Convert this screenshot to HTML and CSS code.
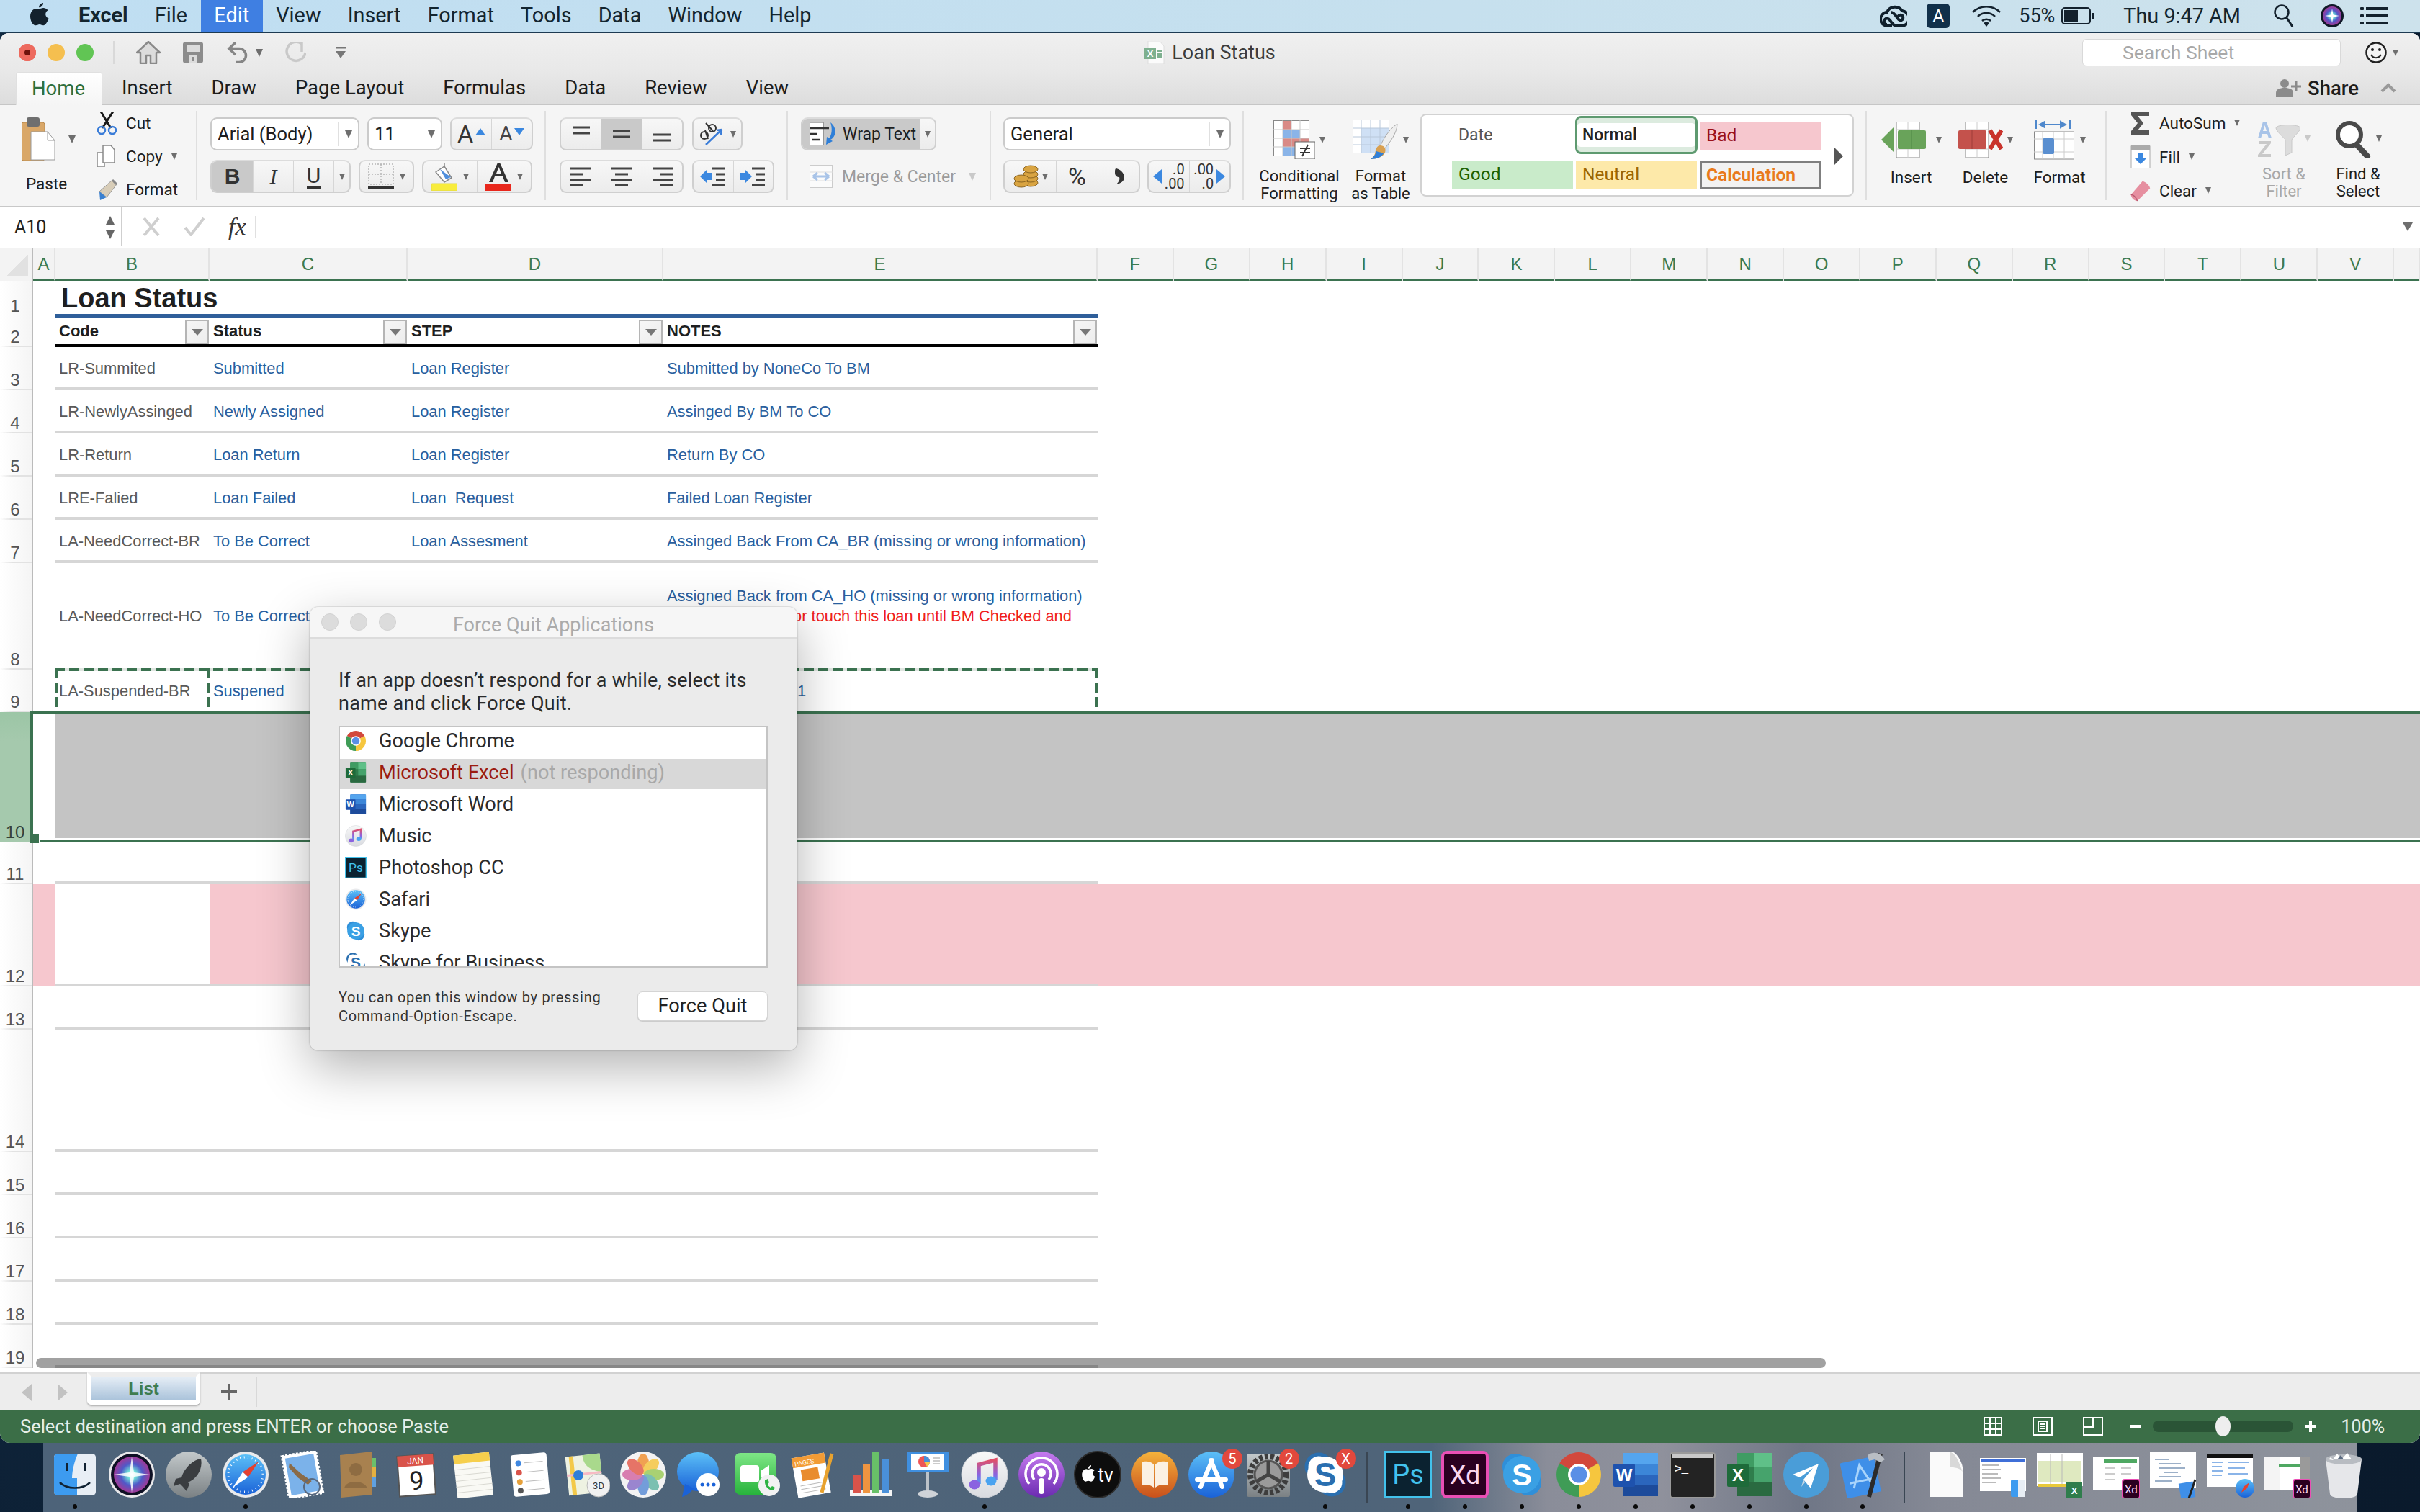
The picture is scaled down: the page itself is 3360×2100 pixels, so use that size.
FILE: index.html
```html
<!DOCTYPE html>
<html lang="en">
<head>
<meta charset="utf-8">
<title>Loan Status</title>
<link rel="stylesheet" href="styles.css">
</head>
<body>
<svg class="defs" width="0" height="0" aria-hidden="true">
<defs>
<linearGradient id="gBlue" x1="0" y1="0" x2="0" y2="1"><stop offset="0" stop-color="#5cc0f7"/><stop offset="1" stop-color="#1a62d8"/></linearGradient>
<linearGradient id="gOrange" x1="0" y1="0" x2="0" y2="1"><stop offset="0" stop-color="#f5b33c"/><stop offset="1" stop-color="#c9501c"/></linearGradient>
<linearGradient id="gPurple" x1="0" y1="0" x2="0" y2="1"><stop offset="0" stop-color="#c67bf0"/><stop offset="1" stop-color="#6a2bb0"/></linearGradient>
<linearGradient id="gNote" x1="0" y1="0" x2="0" y2="1"><stop offset="0" stop-color="#e0506a"/><stop offset=".6" stop-color="#8b63e0"/><stop offset="1" stop-color="#4aa3f0"/></linearGradient>
<linearGradient id="gGray" x1="0" y1="0" x2="0" y2="1"><stop offset="0" stop-color="#c3c9cb"/><stop offset="1" stop-color="#7b8184"/></linearGradient>
<linearGradient id="gSilver" x1="0" y1="0" x2="0" y2="1"><stop offset="0" stop-color="#f8f8f8"/><stop offset="1" stop-color="#d9dbe0"/></linearGradient>
<linearGradient id="gFace" x1="0" y1="0" x2="0" y2="1"><stop offset="0" stop-color="#7ee686"/><stop offset="1" stop-color="#27b33c"/></linearGradient>
<radialGradient id="gSiri"><stop offset="0" stop-color="#ffffff"/><stop offset=".25" stop-color="#6fe0d8"/><stop offset=".6" stop-color="#5058c8"/><stop offset="1" stop-color="#a03a98"/></radialGradient>

<symbol id="i-chrome" viewBox="0 0 66 66">
<path d="M33 33L6.2 17.5A31 31 0 0 1 59.8 17.5Z" fill="#d2483c"/>
<path d="M33 33L59.8 17.5A31 31 0 0 1 33 64Z" fill="#f6c63e"/>
<path d="M33 33L33 64A31 31 0 0 1 6.2 17.5Z" fill="#3f9c56"/>
<circle cx="33" cy="33" r="15" fill="#fff"/><circle cx="33" cy="33" r="11.5" fill="#5a8fe6"/>
</symbol>
<symbol id="i-excel" viewBox="0 0 66 66">
<rect x="16" y="3" width="48" height="60" rx="3" fill="#2f7d4c"/>
<rect x="40" y="3" width="24" height="20" fill="#5fc088"/><rect x="16" y="3" width="24" height="20" fill="#3f9c63"/>
<rect x="40" y="23" width="24" height="20" fill="#46a36c"/><rect x="16" y="23" width="24" height="20" fill="#2f7d4c"/>
<rect x="16" y="43" width="48" height="20" fill="#2a6a41"/>
<rect x="2" y="18" width="30" height="32" rx="2" fill="#1e6b3a"/>
<text x="17" y="42" class="svg-b" font-size="24" fill="#fff" text-anchor="middle">X</text>
</symbol>
<symbol id="i-word" viewBox="0 0 66 66">
<rect x="16" y="3" width="48" height="60" rx="3" fill="#2b6bc4"/>
<rect x="16" y="3" width="48" height="15" fill="#55a5ee"/><rect x="16" y="18" width="48" height="15" fill="#3c86d8"/>
<rect x="16" y="33" width="48" height="15" fill="#2b66bd"/><rect x="16" y="48" width="48" height="15" fill="#1d4b9b"/>
<rect x="2" y="18" width="30" height="32" rx="2" fill="#1e52ae"/>
<text x="17" y="42" class="svg-b" font-size="24" fill="#fff" text-anchor="middle">W</text>
</symbol>
<symbol id="i-safari" viewBox="0 0 66 66">
<circle cx="33" cy="33" r="32" fill="#e9eaec"/><circle cx="33" cy="33" r="28" fill="url(#gBlue)"/>
<circle cx="33" cy="33" r="24" fill="none" stroke="#fff" stroke-width="3" stroke-dasharray="1 4.5"/>
<path d="M51 15L29 29.5L36.500 36.500Z" fill="#e5402f"/><path d="M15 51L29 29.5L36.500 36.500Z" fill="#fff"/>
</symbol>
<symbol id="i-music" viewBox="0 0 66 66">
<circle cx="33" cy="33" r="32" fill="url(#gSilver)" stroke="#cfd2d8"/>
<path d="M25 46V19L48 13V41" fill="none" stroke="url(#gNote)" stroke-width="5.500"/>
<ellipse cx="19" cy="47" rx="7.500" ry="6.500" fill="#8b63e0"/><ellipse cx="42" cy="42" rx="7.500" ry="6.500" fill="#4aa3f0"/>
</symbol>
<symbol id="i-ps" viewBox="0 0 66 66">
<rect x="1.500" y="1.500" width="63" height="63" fill="#0b2230" stroke="#42c2ec" stroke-width="3"/>
<text x="33" y="46" class="svg-t" font-size="38" fill="#42c2ec" text-anchor="middle">Ps</text>
</symbol>
<symbol id="i-xd" viewBox="0 0 66 66">
<rect x="2" y="2" width="62" height="62" rx="6" fill="#2b0020" stroke="#ea4fb5" stroke-width="4"/>
<text x="33" y="46" class="svg-t" font-size="36" fill="#fad7f0" text-anchor="middle">Xd</text>
</symbol>
<symbol id="i-skype" viewBox="0 0 66 66">
<circle cx="24" cy="22" r="18" fill="#2f8fd9"/><circle cx="42" cy="44" r="18" fill="#2f8fd9"/><circle cx="33" cy="33" r="26" fill="#3aa0e4"/>
<text x="33" y="48" class="svg-b" font-size="42" fill="#fff" text-anchor="middle">S</text>
</symbol>
<symbol id="i-sfb" viewBox="0 0 66 66">
<circle cx="24" cy="22" r="17" fill="#fff" stroke="#2a6fb0" stroke-width="5"/><circle cx="42" cy="44" r="17" fill="#fff" stroke="#2a6fb0" stroke-width="5"/><circle cx="33" cy="33" r="25" fill="#fff"/>
<text x="33" y="49" class="svg-b" font-size="46" fill="#2a6fb0" text-anchor="middle">S</text>
</symbol>
</defs>
</svg>

<header class="menubar">
  <svg class="apple" width="26" height="32" viewBox="0 0 26 32"><path d="M18 0c.3 3-2.500 6.500-5.800 6.300C11.800 3.300 15 .4 18 0zM12.500 8.200c1.500 0 3.200-1.300 5.800-1.300 1.800 0 4.500.8 6.200 3.400-4.900 3.100-3.900 9.500 1.200 11.500-1.300 3.500-4.300 9.500-7.500 9.500-2 0-3-1.300-5.300-1.300s-3.400 1.300-5.200 1.300C3.500 31.800 0 24.500 0 18.800 0 12.300 4 8 8.200 7.900c1.800 0 3.200.3 4.300.3z" fill="#13212d"/></svg>
  <span class="menu menu-app">Excel</span>
  <span class="menu">File</span>
  <span class="menu menu-on">Edit</span>
  <span class="menu">View</span>
  <span class="menu">Insert</span>
  <span class="menu">Format</span>
  <span class="menu">Tools</span>
  <span class="menu">Data</span>
  <span class="menu">Window</span>
  <span class="menu">Help</span>
  <div class="tray">
    <svg width="38" height="36" viewBox="0 0 38 36"><g fill="none" stroke="#10202c" stroke-width="4"><path d="M17 32H11a9.500 9.500 0 0 1-1-19A12 12 0 0 1 31 11a10.500 10.500 0 0 1-2 21h-6c-4 0-7-5-9-8-2-3-5-3-7-1-2.500 3-.5 7 3 7"/><path d="M15 13c4 0 6 3 8 6 2 3 4 6 7 5 3-1 3-6 0-7-2-.5-4 .5-5 2"/></g></svg>
    <span class="tray-a">A</span>
    <svg class="tray-wifi" width="42" height="32" viewBox="0 0 42 32"><g fill="none" stroke="#13212d" stroke-width="2.500"><path d="M2 11a27 27 0 0 1 38 0"/><path d="M9 17a17 17 0 0 1 24 0"/><path d="M15 23a9 9 0 0 1 12 0"/></g><path d="M21 31l-4-5a6 6 0 0 1 8 0z" fill="#13212d"/></svg>
    <span class="tray-pct">55%</span>
    <svg class="tray-batt" width="46" height="24" viewBox="0 0 46 24"><rect x="1" y="1" width="39" height="22" rx="4" fill="none" stroke="#13212d" stroke-width="2"/><rect x="4" y="4" width="19" height="16" fill="#13212d"/><rect x="42" y="8" width="3" height="8" fill="#13212d"/></svg>
    <span class="tray-time">Thu 9:47 AM</span>
    <svg class="tray-search" width="30" height="34" viewBox="0 0 30 34"><circle cx="12" cy="12" r="9.500" fill="none" stroke="#13212d" stroke-width="2.500"/><path d="M18.500 19L27 32" stroke="#13212d" stroke-width="3"/></svg>
    <svg class="tray-siri" width="32" height="32" viewBox="0 0 32 32"><circle cx="16" cy="16" r="16" fill="#101828"/><circle cx="16" cy="16" r="13" fill="url(#gSiri)"/><path d="M16 6l1.500 8.500L26 16l-8.500 1.500L16 26l-1.500-8.500L6 16l8.500-1.500z" fill="#fff"/></svg>
    <svg class="tray-list" width="38" height="24" viewBox="0 0 38 24"><g fill="#13212d"><rect width="5" height="4" rx="1"/><rect y="10" width="5" height="4" rx="1"/><rect y="20" width="5" height="4" rx="1"/><rect x="8" width="30" height="4"/><rect x="8" y="10" width="30" height="4"/><rect x="8" y="20" width="30" height="4"/></g></svg>
  </div>
</header>

<main class="window">
  <div class="titlebar">
    <div class="title-left">
      <span class="light light-r"></span><span class="light light-y"></span><span class="light light-g"></span>
      <span class="title-sep"></span>
      <svg class="qat-home" width="34" height="32" viewBox="0 0 34 32"><path d="M17 1L1 16h5v15h8V20h6v11h8V16h5z" fill="#dcdcdc" stroke="#8a8a8a" stroke-width="2.500" stroke-linejoin="round"/></svg>
      <svg class="qat-save" width="28" height="28" viewBox="0 0 28 28"><path d="M2 0h24a2 2 0 0 1 2 2v24a2 2 0 0 1-2 2H2a2 2 0 0 1-2-2V2a2 2 0 0 1 2-2z" fill="#8c8c8c"/><rect x="5" y="3" width="18" height="10" fill="#dcdcdc"/><rect x="8" y="17" width="12" height="11" fill="#dcdcdc"/><rect x="12" y="20" width="4" height="6" fill="#8c8c8c"/></svg>
      <svg class="qat-undo" width="32" height="30" viewBox="0 0 32 30"><path d="M12 1L3 9.500l9 8.500M3 9.500h14a9 9 0 0 1 0 19h-4" fill="none" stroke="#868686" stroke-width="3.500"/></svg>
      <i class="caret caret-qat"></i>
      <svg class="qat-redo" width="30" height="30" viewBox="0 0 30 30"><path d="M24 3a13 13 0 1 0 5 12M24 1v13" fill="none" stroke="#c9c9c9" stroke-width="3.500"/></svg>
      <svg class="qat-more" width="14" height="16" viewBox="0 0 14 16"><rect width="14" height="2.500" fill="#777"/><path d="M0 6h14l-7 10z" fill="#777"/></svg>
    </div>
    <div class="title-mid">
      <svg width="28" height="32" viewBox="0 0 28 32"><path d="M5 0h16l6 7v25H5z" fill="#fbfbfb" stroke="#ddd"/><rect y="9" width="16" height="16" fill="#7eb08f"/><text x="8" y="22" class="svg-b" font-size="13" fill="#fff" text-anchor="middle">X</text><g fill="#7eb08f"><rect x="18" y="12" width="3" height="3"/><rect x="22" y="12" width="3" height="3"/><rect x="18" y="16" width="3" height="3"/><rect x="22" y="16" width="3" height="3"/><rect x="18" y="20" width="3" height="3"/><rect x="22" y="20" width="3" height="3"/></g></svg>
      <span class="doc-title">Loan Status</span>
    </div>
    <div class="title-right">
      <div class="search">Search Sheet</div>
      <svg class="smiley" width="30" height="30" viewBox="0 0 30 30"><circle cx="15" cy="15" r="13.500" fill="#f4f4f4" stroke="#222" stroke-width="2.500"/><circle cx="10" cy="11" r="2" fill="#222"/><circle cx="20" cy="11" r="2" fill="#222"/><path d="M8 18a8 8 0 0 0 14 0" fill="none" stroke="#222" stroke-width="2"/></svg>
      <i class="caret caret-sm"></i>
    </div>
  </div>

  <nav class="tabs">
    <span class="tab tab-on">Home</span>
    <span class="tab">Insert</span>
    <span class="tab">Draw</span>
    <span class="tab">Page Layout</span>
    <span class="tab">Formulas</span>
    <span class="tab">Data</span>
    <span class="tab">Review</span>
    <span class="tab">View</span>
    <div class="share">
      <svg width="36" height="26" viewBox="0 0 36 26"><circle cx="12" cy="7" r="6" fill="#8b8b8b"/><path d="M0 26v-6c0-5 5-7 12-7s12 2 12 7v6z" fill="#8b8b8b"/><path d="M28 4v14M21 11h14" stroke="#8b8b8b" stroke-width="3"/></svg>
      <span>Share</span>
      <svg class="chev" width="22" height="14" viewBox="0 0 22 14"><path d="M2 12L11 3l9 9" fill="none" stroke="#9a9a9a" stroke-width="4"/></svg>
    </div>
  </nav>

  <section class="ribbon">
    <div class="rg rg-clip">
      <div class="paste">
        <div class="paste-top">
          <svg width="46" height="60" viewBox="0 0 46 60"><rect y="7" width="32" height="53" rx="3" fill="#d9a768" stroke="#b98a4e"/><rect x="7" y="0" width="18" height="13" rx="3" fill="#6f6f6f"/><path d="M13 20h23l10 12v27H13z" fill="#fff" stroke="#9a9a9a"/><path d="M36 20v12h10" fill="none" stroke="#9a9a9a"/></svg>
          <i class="caret"></i>
        </div>
        <span class="lbl">Paste</span>
      </div>
      <div class="clip-list">
        <div class="clip-item"><svg width="30" height="32" viewBox="0 0 30 32"><path d="M6 0l14 23M23 0L8 23" stroke="#1a1a1a" stroke-width="3"/><circle cx="7" cy="26" r="5" fill="none" stroke="#3b7dd8" stroke-width="2.500"/><circle cx="22" cy="26" r="5" fill="none" stroke="#3b7dd8" stroke-width="2.500"/></svg><span>Cut</span></div>
        <div class="clip-item"><svg width="30" height="30" viewBox="0 0 30 30"><path d="M1 10h10v20H1z" fill="#fff" stroke="#888" stroke-width="1.500"/><path d="M9 0h11l5 6v18H9z" fill="#fff" stroke="#888" stroke-width="1.500"/></svg><span>Copy</span><i class="caret caret-sm"></i></div>
        <div class="clip-item"><svg width="30" height="30" viewBox="0 0 30 30"><path d="M4 18L22 2l6 6-14 18z" fill="#d8cdb8" stroke="#999"/><path d="M4 18l10 8-9 4z" fill="#3a80d0"/><path d="M22 2l6 6" stroke="#888" stroke-width="3"/></svg><span>Format</span></div>
      </div>
    </div>

    <div class="rg rg-font">
      <div class="rrow">
        <div class="combo combo-font"><span>Arial (Body)</span><i class="combo-sep"></i><i class="caret"></i></div>
        <div class="combo combo-size"><span>11</span><i class="combo-sep"></i><i class="caret"></i></div>
        <div class="bgroup bg-grow">
          <div class="bc bc-1"><span class="big-a">A</span><i class="tri-up"></i></div>
          <div class="bc bc-1"><span class="small-a">A</span><i class="tri-down"></i></div>
        </div>
      </div>
      <div class="rrow">
        <div class="bgroup bg-biu">
          <div class="bc bc-on b-b">B</div>
          <div class="bc b-i">I</div>
          <div class="bc b-u"><span>U</span></div>
          <div class="bc bc-arrow"><i class="caret caret-sm"></i></div>
        </div>
        <div class="bgroup bg-border">
          <div class="bc bc-fill"><svg width="36" height="36" viewBox="0 0 36 36"><g fill="none" stroke="#b5b5b5" stroke-width="1.500" stroke-dasharray="2 2"><path d="M1 1h34v28H1zM18 1v28M1 15h34"/></g><rect y="32" width="36" height="4" fill="#333"/></svg><i class="caret caret-sm"></i></div>
        </div>
        <div class="bgroup bg-color">
          <div class="bc bc-col"><svg width="36" height="40" viewBox="0 0 36 40"><path d="M18 1v10" stroke="#888" stroke-width="1.500"/><path d="M6 14l12-8 10 16-10 6z" fill="#fff" stroke="#888" stroke-width="1.500"/><path d="M12 10l8 14 7-3z" fill="#4f8edc"/><rect y="30" width="36" height="10" rx="1" fill="#f8ec3c" stroke="#e0d84a"/></svg><i class="caret caret-sm"></i></div>
          <div class="bc bc-col"><svg width="36" height="40" viewBox="0 0 36 40"><path d="M5 28L17 1h3l12 27h-5l-3-8H13l-3 8zM15 16h7l-3.500-9z" fill="#333" fill-rule="evenodd"/><rect y="30" width="36" height="10" fill="#e8271c"/></svg><i class="caret caret-sm"></i></div>
        </div>
      </div>
    </div>

    <div class="rg rg-align">
      <div class="rrow">
        <div class="bgroup bg-three">
          <div class="bc"><svg class="ic" width="26" height="26" viewBox="0 0 26 26"><path d="M1 4h24M1 12h24" stroke="#444" stroke-width="3"/></svg></div>
          <div class="bc bc-on"><svg class="ic" width="26" height="26" viewBox="0 0 26 26"><path d="M1 9h24M1 17h24" stroke="#444" stroke-width="3"/></svg></div>
          <div class="bc"><svg class="ic" width="26" height="26" viewBox="0 0 26 26"><path d="M1 14h24M1 22h24" stroke="#444" stroke-width="3"/></svg></div>
        </div>
        <div class="bgroup bg-orient">
          <div class="bc bc-fill"><svg width="36" height="36" viewBox="0 0 36 36"><g fill="none" stroke="#333" stroke-width="2"><circle cx="8" cy="20" r="5"/><path d="M13 25L9 13"/><circle cx="19" cy="10" r="5"/><path d="M10 3L20 14"/></g><path d="M10 33L32 12M32 12l-7 1M32 12l-1 7" fill="none" stroke="#3b7dd8" stroke-width="2.500"/></svg><i class="caret caret-sm"></i></div>
        </div>
      </div>
      <div class="rrow">
        <div class="bgroup bg-three">
          <div class="bc"><svg class="ic" width="30" height="26" viewBox="0 0 30 26"><path d="M0 2h28M0 10h18M0 18h28M0 25h18" stroke="#444" stroke-width="3"/></svg></div>
          <div class="bc"><svg class="ic" width="30" height="26" viewBox="0 0 30 26"><path d="M1 2h28M6 10h18M1 18h28M6 25h18" stroke="#444" stroke-width="3"/></svg></div>
          <div class="bc"><svg class="ic" width="30" height="26" viewBox="0 0 30 26"><path d="M2 2h28M12 10h18M2 18h28M12 25h18" stroke="#444" stroke-width="3"/></svg></div>
        </div>
        <div class="bgroup bg-indent">
          <div class="bc"><svg class="ic" width="36" height="26" viewBox="0 0 36 26"><path d="M0 13L10 3v5h6v10h-6v5z" fill="#3b88e0"/><path d="M16 2h18M22 10h12M22 18h12M16 25h18" stroke="#444" stroke-width="3"/></svg></div>
          <div class="bc"><svg class="ic" width="36" height="26" viewBox="0 0 36 26"><path d="M16 13L6 3v5H0v10h6v5z" fill="#3b88e0"/><path d="M16 2h18M22 10h12M22 18h12M16 25h18" stroke="#444" stroke-width="3"/></svg></div>
        </div>
      </div>
    </div>

    <div class="rg rg-wrap">
      <div class="rrow">
        <div class="bgroup bg-wrap">
          <div class="bc bc-on bc-wraptext"><svg width="40" height="32" viewBox="0 0 40 32"><rect x="0" y="0" width="19" height="32" fill="#fff" stroke="#666"/><path d="M0 8h27M0 16h10M4 24h10" stroke="#333" stroke-width="2.500"/><path d="M29 0c10 8 8 20 0 24l3 2-9 5 1-11 3 2c4-4 5-14 2-22z" fill="#2f7fd8"/></svg><span>Wrap Text</span></div>
          <div class="bc bc-arrow2"><i class="caret caret-sm"></i></div>
        </div>
      </div>
      <div class="rrow merge">
        <svg width="32" height="32" viewBox="0 0 32 32"><rect x=".5" y=".5" width="31" height="31" fill="#fbfbfb" stroke="#ccc"/><path d="M0 10h32M0 22h32" stroke="#ddd"/><path d="M5 16h22M5 16l6-5M5 16l6 5M27 16l-6-5M27 16l-6 5" fill="none" stroke="#a9c4e8" stroke-width="3"/></svg>
        <span>Merge &amp; Center</span><i class="caret caret-light"></i>
      </div>
    </div>

    <div class="rg rg-num">
      <div class="rrow">
        <div class="combo combo-gen"><span>General</span><i class="combo-sep"></i><i class="caret"></i></div>
      </div>
      <div class="rrow">
        <div class="bgroup bg-cur">
          <div class="bc bc-coins"><svg width="36" height="32" viewBox="0 0 36 32"><g fill="#d9a441" stroke="#8a6420"><ellipse cx="24" cy="25" rx="10" ry="5"/><ellipse cx="24" cy="19" rx="10" ry="5"/><ellipse cx="24" cy="13" rx="10" ry="5"/><ellipse cx="24" cy="6" rx="10" ry="5"/><ellipse cx="11" cy="26" rx="10" ry="5"/><ellipse cx="11" cy="19" rx="10" ry="5"/></g></svg><i class="caret caret-sm"></i></div>
          <div class="bc sym">%</div>
          <div class="bc sym"><svg width="13" height="22" viewBox="0 0 13 22"><path d="M2 0C10 2 13 8 13 13C13 17 8 21 2 22C6 18 7 15 6 12C3 12 0 10 0 6C0 3 0 0 2 0z" fill="#333"/></svg></div>
        </div>
        <div class="bgroup bg-dec">
          <div class="bc dec"><svg width="14" height="22" viewBox="0 0 14 22"><path d="M0 11L12 1v20z" fill="#3b88e0"/></svg><div class="dec-txt"><span>.0</span><span>.00</span></div></div>
          <div class="bc dec dec2"><div class="dec-txt"><span>.00</span><span>.0</span></div><svg width="14" height="22" viewBox="0 0 14 22"><path d="M14 11L2 1v20z" fill="#3b88e0"/></svg></div>
        </div>
      </div>
    </div>

    <div class="rg-styles">
      <div class="big-item bi-cond">
        <div class="bi-top"><svg width="58" height="54" viewBox="0 0 58 54"><rect x=".5" y=".5" width="49" height="49" fill="#fff" stroke="#888"/><rect x="13" y="1" width="12" height="12" fill="#d98a86"/><rect x="13" y="13" width="24" height="12" fill="#8ab4e8"/><rect x="13" y="25" width="37" height="12" fill="#d98a86"/><rect x="13" y="37" width="24" height="12" fill="#8ab4e8"/><path d="M13 0v50M25 0v50M37 0v50M0 13h50M0 25h50M0 37h50" stroke="#c8c8c8"/><rect x="30" y="30" width="28" height="24" fill="#fff" stroke="#666"/><path d="M37 39h14M37 45h14M48 34l-8 16" stroke="#333" stroke-width="2" fill="none"/></svg><i class="caret caret-sm"></i></div>
        <span class="lbl2">Conditional<br>Formatting</span>
      </div>
      <div class="big-item bi-fmt">
        <div class="bi-top"><svg width="64" height="56" viewBox="0 0 64 56"><rect x=".5" y=".5" width="50" height="46" fill="#fff" stroke="#888"/><rect x="12" y="12" width="38" height="34" fill="#cfe0f5"/><path d="M12 0v47M25 0v47M38 0v47M0 12h50M0 24h50M0 35h50" stroke="#b9c8da"/><path d="M62 6C50 14 42 28 38 38l5 4C52 32 62 18 62 6z" fill="#eee" stroke="#aaa"/><path d="M38 36c6 0 9 4 7 10-2 5-10 9-20 9 6-4 6-8 7-12 1-4 3-7 6-7z" fill="#d9a050"/><path d="M25 55c6-4 7-8 8-11 6 2 9 2 10 3-3 5-9 8-18 8z" fill="#2f7fd8"/></svg><i class="caret caret-sm"></i></div>
        <span class="lbl2">Format<br>as Table</span>
      </div>
    </div>

    <div class="gallery">
      <div class="gal-grid">
        <span class="st st-date">Date</span>
        <span class="st st-normal">Normal</span>
        <span class="st st-bad">Bad</span>
        <span class="st st-good">Good</span>
        <span class="st st-neutral">Neutral</span>
        <span class="st st-calc">Calculation</span>
      </div>
      <i class="gal-next"></i>
    </div>

    <div class="rg-cells">
      <div class="cell-item">
        <div class="bi-top"><svg width="70" height="50" viewBox="0 0 70 50"><rect x="21" y="0" width="32" height="50" fill="#fff" stroke="#888"/><path d="M37 0v50M21 11h32M21 38h32" stroke="#ccc"/><rect x="23" y="12" width="39" height="26" rx="2" fill="#69a35a"/><path d="M42 12v26" stroke="#4f8745"/><path d="M0 25L17 8v34z" fill="#69a35a"/></svg><i class="caret caret-sm"></i></div>
        <span class="lbl">Insert</span>
      </div>
      <div class="cell-item">
        <div class="bi-top"><svg width="62" height="50" viewBox="0 0 62 50"><rect x="10" y="0" width="32" height="50" fill="#fff" stroke="#888"/><path d="M26 0v50M10 11h32M10 38h32" stroke="#ccc"/><rect x="0" y="12" width="39" height="26" rx="2" fill="#c4524c"/><path d="M19 12v26" stroke="#9e3c38"/><path d="M44 12l16 26M60 12L44 38" stroke="#c9332c" stroke-width="6"/></svg><i class="caret caret-sm"></i></div>
        <span class="lbl">Delete</span>
      </div>
      <div class="cell-item">
        <div class="bi-top"><svg width="58" height="55" viewBox="0 0 58 55"><path d="M3 0v12M50 0v12M8 6h36M8 6l7-4v8zM44 6l-7-4v8z" fill="#4f88cc" stroke="#4f88cc" stroke-width="2"/><rect x=".5" y="16" width="55" height="38" fill="#fff" stroke="#888"/><path d="M12 16v38M27 16v38M42 16v38M0 26h56M0 44h56" stroke="#ccc"/><rect x="12" y="25" width="16" height="22" rx="2" fill="#5a8fd0"/></svg><i class="caret caret-sm"></i></div>
        <span class="lbl">Format</span>
      </div>
    </div>

    <div class="rg-edit">
      <div class="clip-list edit-list">
        <div class="clip-item"><svg width="28" height="32" viewBox="0 0 28 32"><path d="M1 0h25v6H10l8 10-8 10h16v6H1v-5l9-11-9-11z" fill="#555"/></svg><span>AutoSum</span><i class="caret caret-sm"></i></div>
        <div class="clip-item"><svg width="28" height="32" viewBox="0 0 28 32"><rect x="1" y="0" width="26" height="32" rx="1" fill="#fff" stroke="#aaa"/><rect x="1" y="0" width="26" height="6" fill="#aaa"/><path d="M14 26l-9-9h5v-7h8v7h5z" fill="#3b88e0"/></svg><span>Fill</span><i class="caret caret-sm"></i></div>
        <div class="clip-item"><svg width="34" height="32" viewBox="0 0 34 32"><path d="M2 22L20 1c5 1 11 6 12 11L12 32c-5 0-10-5-10-10z" fill="#e68fa0"/><path d="M2 22c3 0 8 3 10 10" fill="none" stroke="#b8586e" stroke-width="1.500"/></svg><span>Clear</span><i class="caret caret-sm"></i></div>
      </div>
      <div class="cell-item ci-sort">
        <div class="bi-top"><svg width="60" height="50" viewBox="0 0 60 50"><path d="M1 24L8 1h5l7 23h-4l-2-6H7l-2 6zM8 14h5l-2.500-8z" fill="#a9c4e8" fill-rule="evenodd"/><path d="M2 28h17v3L7 46h12v4H1v-3l12-15H2z" fill="#c9c9c9"/><path d="M26 10c0-6 34-6 34 0-1 5-10 12-12 16v18l-9 4V26c-3-4-12-11-13-16z" fill="#dcdcdc" stroke="#c9c9c9"/></svg><i class="caret caret-sm caret-light"></i></div>
        <span class="lbl2 muted">Sort &amp;<br>Filter</span>
      </div>
      <div class="cell-item ci-find">
        <div class="bi-top"><svg width="52" height="52" viewBox="0 0 52 52"><circle cx="21" cy="20" r="16" fill="#fff" stroke="#4a4a4a" stroke-width="6"/><path d="M31 34l15 16" stroke="#4a4a4a" stroke-width="8" stroke-linecap="round"/></svg><i class="caret caret-sm"></i></div>
        <span class="lbl2">Find &amp;<br>Select</span>
      </div>
    </div>
  </section>

  <section class="formula">
    <div class="namebox"><span>A10</span><span class="spin"><i class="tri-a"></i><i class="tri-b"></i></span></div>
    <svg class="f-x" width="24" height="26" viewBox="0 0 24 26"><path d="M2 1l20 24M22 1L2 25" stroke="#cfcfcf" stroke-width="4"/></svg>
    <svg class="f-c" width="30" height="26" viewBox="0 0 30 26"><path d="M2 14l8 10L28 1" fill="none" stroke="#cfcfcf" stroke-width="4"/></svg>
    <span class="f-fx">fx</span>
    <i class="f-sep"></i>
    <div class="f-input"></div>
    <i class="caret f-caret"></i>
  </section>

  <section class="colhead">
    <div class="corner"></div>
    <div class="ch">A</div><div class="ch">B</div><div class="ch">C</div><div class="ch">D</div><div class="ch">E</div>
    <div class="ch">F</div><div class="ch">G</div><div class="ch">H</div><div class="ch">I</div><div class="ch">J</div>
    <div class="ch">K</div><div class="ch">L</div><div class="ch">M</div><div class="ch">N</div><div class="ch">O</div>
    <div class="ch">P</div><div class="ch">Q</div><div class="ch">R</div><div class="ch">S</div><div class="ch">T</div>
    <div class="ch">U</div><div class="ch">V</div><div class="ch"></div>
  </section>

  <section class="sheet">
    <div class="row r1">
      <div class="rh rh-1">1</div><div></div>
      <div class="c c-title span4">Loan Status</div>
    </div>
    <div class="row r2">
      <div class="rh">2</div><div></div>
      <div class="c c-hd">Code<i class="filter"></i></div>
      <div class="c c-hd">Status<i class="filter"></i></div>
      <div class="c c-hd">STEP<i class="filter"></i></div>
      <div class="c c-hd">NOTES<i class="filter"></i></div>
    </div>
    <div class="row r60">
      <div class="rh">3</div><div></div>
      <div class="c c-code">LR-Summited</div><div class="c c-b">Submitted</div><div class="c c-b">Loan Register</div><div class="c c-b">Submitted by NoneCo To BM</div>
    </div>
    <div class="row r60">
      <div class="rh">4</div><div></div>
      <div class="c c-code">LR-NewlyAssinged</div><div class="c c-b">Newly Assigned</div><div class="c c-b">Loan Register</div><div class="c c-b">Assinged By BM To CO</div>
    </div>
    <div class="row r60">
      <div class="rh">5</div><div></div>
      <div class="c c-code">LR-Return</div><div class="c c-b">Loan Return</div><div class="c c-b">Loan Register</div><div class="c c-b">Return By CO</div>
    </div>
    <div class="row r60">
      <div class="rh">6</div><div></div>
      <div class="c c-code">LRE-Falied</div><div class="c c-b">Loan Failed</div><div class="c c-b pre">Loan  Request</div><div class="c c-b">Failed Loan Register</div>
    </div>
    <div class="row r60">
      <div class="rh">7</div><div></div>
      <div class="c c-code">LA-NeedCorrect-BR</div><div class="c c-b">To Be Correct</div><div class="c c-b">Loan Assesment</div><div class="c c-b">Assinged Back From CA_BR (missing or wrong information)</div>
    </div>
    <div class="row r8">
      <div class="rh">8</div><div></div>
      <div class="c c-code c-nb">LA-NeedCorrect-HO</div><div class="c c-b c-nb">To Be Correct</div><div class="c c-nb"></div>
      <div class="c c-b c-nb c-multi"><span>Assigned Back from CA_HO (missing or wrong information)</span><span class="red">or touch this loan until BM Checked and</span></div>
    </div>
    <div class="row r9">
      <div class="rh">9</div><div></div>
      <div class="c c-code c-nb">LA-Suspended-BR</div><div class="c c-b c-nb">Suspened</div><div class="c c-nb"></div><div class="c c-b c-nb c-one">1</div>
    </div>
    <div class="row r10">
      <div class="rh rh-sel">10</div><div></div>
      <div class="gray-fill"></div>
    </div>
    <div class="row r11">
      <div class="rh">11</div><div></div>
      <div class="c span4"></div>
    </div>
    <div class="row r12">
      <div class="rh">12</div><div></div>
      <div class="c c-white"></div><div class="c"></div><div class="c"></div><div class="c"></div>
    </div>
    <div class="row r13">
      <div class="rh">13</div><div></div>
      <div class="c span4"></div>
    </div>
    <div class="row r14">
      <div class="rh">14</div><div></div>
      <div class="c span4"></div>
    </div>
    <div class="row r60">
      <div class="rh">15</div><div></div>
      <div class="c span4"></div>
    </div>
    <div class="row r60">
      <div class="rh">16</div><div></div>
      <div class="c span4"></div>
    </div>
    <div class="row r60">
      <div class="rh">17</div><div></div>
      <div class="c span4"></div>
    </div>
    <div class="row r60">
      <div class="rh">18</div><div></div>
      <div class="c span4"></div>
    </div>
    <div class="row r60">
      <div class="rh">19</div><div></div>
      <div class="c span4"></div>
    </div>

    <div class="ants"><i class="ants-div"></i></div>
    <div class="selection"><i class="handle"></i></div>
    <div class="scrollbar"></div>
  </section>

  <footer class="sheettabs">
    <svg class="st-arrow" width="64" height="24" viewBox="0 0 64 24"><path d="M14 0v24L0 12zM50 0v24l14-12z" fill="#c2c2c2"/></svg>
    <div class="sheet-tab"><span>List</span></div>
    <svg class="st-plus" width="22" height="22" viewBox="0 0 22 22"><path d="M11 0v22M0 11h22" stroke="#666" stroke-width="4"/></svg>
    <i class="st-sep"></i>
  </footer>

  <footer class="status">
    <span>Select destination and press ENTER or choose Paste</span>
    <div class="status-right">
      <svg width="26" height="26" viewBox="0 0 26 26"><path d="M1 1h24v24H1zM9 1v24M17 1v24M1 9h24M1 17h24" fill="none" stroke="#fff" stroke-width="2"/></svg>
      <svg width="28" height="26" viewBox="0 0 28 26"><rect x="1" y="1" width="26" height="24" fill="none" stroke="#fff" stroke-width="2"/><path d="M8 6h12v14H8zM11 10h6M11 13h6M11 16h6" fill="none" stroke="#fff" stroke-width="2"/></svg>
      <svg width="28" height="26" viewBox="0 0 28 26"><path d="M1 1h26v24H1zM14 1v13H1" fill="none" stroke="#fff" stroke-width="2"/></svg>
      <span class="z-minus"></span>
      <div class="z-track"><i class="z-thumb"></i></div>
      <span class="z-plus"></span>
      <span class="z-val">100%</span>
    </div>
  </footer>
</main>

<nav class="dock">
  <div class="di"><svg width="66" height="66" viewBox="0 0 66 66"><rect x="4" y="4" width="58" height="58" rx="5" fill="#e8eef5"/><path d="M9 4H37C31 18 29 30 29 38h7v24H9a5 5 0 0 1-5-5V9a5 5 0 0 1 5-5z" fill="#3d9bf0"/><rect x="20" y="17" width="3" height="11" fill="#123"/><rect x="45" y="17" width="3" height="11" fill="#123"/><path d="M12 44c10 10 32 10 42 0" fill="none" stroke="#123" stroke-width="2.500"/></svg><b class="dot"></b></div>
  <div class="di"><svg width="66" height="66" viewBox="0 0 66 66"><circle cx="33" cy="33" r="32" fill="#e8e8ea"/><circle cx="33" cy="33" r="29" fill="#0e1024"/><circle cx="33" cy="33" r="25" fill="url(#gSiri)"/><path d="M33 8l3 22 22 3-22 3-3 22-3-22-22-3 22-3z" fill="#fff" opacity=".85"/></svg></div>
  <div class="di"><svg width="66" height="66" viewBox="0 0 66 66"><circle cx="33" cy="33" r="32" fill="url(#gGray)"/><path d="M50 11C38 13 27 24 23 37l-8 2-3 10 9-3 4 4 5 6 4-10-2-2C44 39 53 26 50 11z" fill="#3a3d40"/></svg></div>
  <div class="di"><svg width="66" height="66"><use href="#i-safari"/></svg><b class="dot"></b></div>
  <div class="di"><svg width="66" height="66" viewBox="0 0 66 66"><g transform="rotate(-10 33 33)"><rect x="9" y="3" width="48" height="60" fill="#fff" stroke="#fff" stroke-width="3" stroke-dasharray="3 2"/><rect x="13" y="7" width="40" height="52" fill="#7bb2ea"/><path d="M18 14l12 16 14 14-6 4-12-12-10-16z" fill="#8a6b48"/></g><circle cx="46" cy="50" r="11" fill="none" stroke="#5a6a80" stroke-width="2"/></svg></div>
  <div class="di"><svg width="66" height="66" viewBox="0 0 66 66"><path d="M6 6L50 1v60L8 65z" fill="#a8814f"/><path d="M50 10h6v12h-6z" fill="#6bbf6b"/><path d="M50 22h6v14h-6z" fill="#e5b040"/><path d="M50 36h6v14h-6z" fill="#5fa0e0"/><circle cx="28" cy="26" r="9" fill="#8e6c42"/><path d="M12 52c2-12 28-12 32 0z" fill="#8e6c42"/></svg></div>
  <div class="di"><svg width="66" height="66" viewBox="0 0 66 66"><g transform="rotate(-4 33 33)"><rect x="8" y="6" width="50" height="56" fill="#fff" stroke="#555" stroke-width="2"/><rect x="8" y="6" width="50" height="15" fill="#d9534a"/><text x="33" y="18" class="svg-t" font-size="12" fill="#fff" text-anchor="middle">JAN</text><text x="33" y="54" class="svg-t" font-size="36" fill="#222" text-anchor="middle">9</text></g></svg></div>
  <div class="di"><svg width="66" height="66" viewBox="0 0 66 66"><g transform="rotate(-6 33 33)"><rect x="8" y="4" width="50" height="60" fill="#f9f9f4"/><rect x="8" y="4" width="50" height="12" fill="#f6cf4d"/><path d="M8 24h50M8 32h50M8 40h50M8 48h50M8 56h50" stroke="#d9d9d2"/></g></svg></div>
  <div class="di"><svg width="66" height="66" viewBox="0 0 66 66"><g transform="rotate(-5 33 33)"><rect x="8" y="4" width="50" height="58" rx="4" fill="#fff"/><circle cx="18" cy="16" r="4" fill="#3f87e0"/><circle cx="18" cy="29" r="4" fill="#d9534a"/><circle cx="18" cy="42" r="4" fill="#e6a03a"/><circle cx="18" cy="54" r="4" fill="#555"/><path d="M26 16h26M26 29h26M26 42h26M26 54h26" stroke="#bbb"/></g></svg></div>
  <div class="di"><svg width="66" height="66" viewBox="0 0 66 66"><g transform="rotate(-6 30 30)"><rect x="6" y="6" width="48" height="54" fill="#eef2e2"/><path d="M30 6c0 16 10 22 24 26V6z" fill="#a9d98c"/><path d="M14 6v54" stroke="#f3c94a" stroke-width="6"/><path d="M6 32h48" stroke="#f7b9c4" stroke-width="3"/></g><circle cx="22" cy="34" r="7" fill="#2f7fd8"/><circle cx="50" cy="48" r="16" fill="#f1f1f1" stroke="#bbb"/><text x="50" y="53" class="svg-t" font-size="13" fill="#333" text-anchor="middle">3D</text></svg></div>
  <div class="di"><svg width="66" height="66" viewBox="0 0 66 66"><circle cx="33" cy="33" r="32" fill="#f3f3f3"/><g opacity=".85"><ellipse cx="33" cy="18" rx="8" ry="14" fill="#f09336"/><ellipse cx="33" cy="18" rx="8" ry="14" fill="#f6c744" transform="rotate(45 33 33)"/><ellipse cx="33" cy="18" rx="8" ry="14" fill="#9dcc5c" transform="rotate(90 33 33)"/><ellipse cx="33" cy="18" rx="8" ry="14" fill="#67b8a6" transform="rotate(135 33 33)"/><ellipse cx="33" cy="18" rx="8" ry="14" fill="#5d8fd6" transform="rotate(180 33 33)"/><ellipse cx="33" cy="18" rx="8" ry="14" fill="#8b72c9" transform="rotate(225 33 33)"/><ellipse cx="33" cy="18" rx="8" ry="14" fill="#d46aa5" transform="rotate(270 33 33)"/><ellipse cx="33" cy="18" rx="8" ry="14" fill="#e45f4f" transform="rotate(315 33 33)"/></g></svg></div>
  <div class="di"><svg width="66" height="66" viewBox="0 0 66 66"><ellipse cx="30" cy="29" rx="29" ry="27" fill="url(#gBlue)"/><path d="M12 46L8 64c6-2 12-6 16-12z" fill="#1a62d8"/><circle cx="44" cy="47" r="16" fill="#fff"/><circle cx="36" cy="47" r="2.500" fill="#1a62d8"/><circle cx="44" cy="47" r="2.500" fill="#1a62d8"/><circle cx="52" cy="47" r="2.500" fill="#1a62d8"/></svg></div>
  <div class="di"><svg width="66" height="66" viewBox="0 0 66 66"><rect x="2" y="3" width="58" height="58" rx="8" fill="url(#gFace)"/><rect x="10" y="20" width="26" height="24" rx="4" fill="#fff"/><path d="M38 28l12-8v24l-12-8z" fill="#fff"/><circle cx="50" cy="48" r="15" fill="#f2f2f2"/><path d="M44 41c-1 8 5 14 12 14l2-4-4-2-2 2c-2-1-4-3-4-5l2-2-2-5z" fill="#2fb344"/></svg></div>
  <div class="di"><svg width="66" height="66" viewBox="0 0 66 66"><g transform="rotate(-10 30 33)"><rect x="6" y="6" width="46" height="56" fill="#fff"/><rect x="6" y="6" width="46" height="14" fill="#f29b35"/><text x="9" y="18" class="svg-t" font-size="9" fill="#fff">PAGES</text><rect x="16" y="24" width="24" height="16" fill="#e98c2e"/><path d="M12 46h34M12 51h34M12 56h34" stroke="#bbb"/></g><path d="M58 4L44 58" stroke="#e8a22e" stroke-width="5"/></svg></div>
  <div class="di"><svg width="66" height="66" viewBox="0 0 66 66"><rect x="4" y="54" width="58" height="9" fill="#f4f4f4"/><rect x="9" y="34" width="10" height="24" fill="#d9534a"/><rect x="22" y="18" width="10" height="40" fill="#ee9440"/><rect x="35" y="2" width="10" height="56" fill="#68c068"/><rect x="48" y="12" width="10" height="46" fill="#4a90d9"/></svg></div>
  <div class="di"><svg width="66" height="66" viewBox="0 0 66 66"><rect x="4" y="2" width="58" height="28" fill="#3f8fe0"/><rect x="10" y="4" width="46" height="22" fill="#fff"/><circle cx="28" cy="15" r="8" fill="#e55"/><path d="M28 15V7a8 8 0 0 1 8 8z" fill="#4a90d9"/><path d="M28 15h8a8 8 0 0 1-4 7z" fill="#f2c94c"/><path d="M40 10h10M40 14h10M40 18h10" stroke="#999"/><rect x="31" y="30" width="4" height="30" fill="#bcc2c8"/><ellipse cx="33" cy="60" rx="14" ry="5" fill="#cfd3d8"/></svg></div>
  <div class="di"><svg width="66" height="66"><use href="#i-music"/></svg><b class="dot"></b></div>
  <div class="di"><svg width="66" height="66" viewBox="0 0 66 66"><circle cx="33" cy="33" r="32" fill="url(#gPurple)"/><g fill="none" stroke="#fff" stroke-width="3.500"><path d="M16 46a22 22 0 1 1 34 0"/><path d="M23 40a13 13 0 1 1 20 0"/></g><circle cx="33" cy="30" r="6" fill="#fff"/><rect x="29" y="38" width="8" height="22" rx="4" fill="#fff"/></svg></div>
  <div class="di"><svg width="66" height="66" viewBox="0 0 66 66"><circle cx="33" cy="33" r="32" fill="#0d0d0d" stroke="#2d2d2d" stroke-width="2"/><path d="M24 20c.2 2.500-2 5-4 4.800C19.800 22.500 22 20.200 24 20zM20 26c1 0 2.500-1 4.500-1 1.500 0 3.200.8 4 2.200-3.500 2-3 7 .8 8.500-1 2.600-3 7-5.300 7-1.500 0-2.200-1-4-1s-2.500 1-3.800 1c-2.600 0-5-5.400-5-9.500 0-4.800 3-8 6-8 1.200 0 2 .8 2.800.8z" fill="#fff"/><text x="44" y="43" class="svg-t" font-size="27" fill="#fff" text-anchor="middle">tv</text></svg></div>
  <div class="di"><svg width="66" height="66" viewBox="0 0 66 66"><circle cx="33" cy="33" r="32" fill="url(#gOrange)"/><path d="M32 19c-5-5-12-5-17-3v32c6-2 12-1 17 3zM34 19c5-5 12-5 17-3v32c-6-2-12-1-17 3z" fill="#fbf1e3"/></svg></div>
  <div class="di"><svg width="66" height="66" viewBox="0 0 66 66"><circle cx="33" cy="33" r="32" fill="url(#gBlue)"/><path d="M34 13L18 50M32 13l16 37M13 40h40" stroke="#fff" stroke-width="6" stroke-linecap="round"/></svg><b class="badge">5</b></div>
  <div class="di"><svg width="66" height="66" viewBox="0 0 66 66"><rect x="3" y="4" width="60" height="60" rx="3" fill="url(#gGray)"/><circle cx="33" cy="33" r="25" fill="none" stroke="#3d3d3d" stroke-width="8" stroke-dasharray="5 3"/><circle cx="33" cy="33" r="19" fill="#9a9a9a" stroke="#555" stroke-width="3"/><path d="M33 33V14M33 33L16 43M33 33l17 10" stroke="#444" stroke-width="5"/></svg><b class="badge">2</b></div>
  <div class="di"><svg width="66" height="66"><use href="#i-sfb"/></svg><b class="dot"></b><b class="badge badge-x">X</b></div>
  <div class="dsep"></div>
  <div class="di"><svg width="66" height="66"><use href="#i-ps"/></svg><b class="dot"></b></div>
  <div class="di"><svg width="66" height="66"><use href="#i-xd"/></svg><b class="dot"></b></div>
  <div class="di"><svg width="66" height="66"><use href="#i-skype"/></svg><b class="dot"></b></div>
  <div class="di"><svg width="66" height="66"><use href="#i-chrome"/></svg><b class="dot"></b></div>
  <div class="di"><svg width="66" height="66"><use href="#i-word"/></svg><b class="dot"></b></div>
  <div class="di"><svg width="66" height="66" viewBox="0 0 66 66"><rect x="2" y="3" width="62" height="62" rx="3" fill="#232323" stroke="#9a9a9a" stroke-width="2"/><rect x="4" y="5" width="58" height="5" fill="#c9c9c9"/><text x="8" y="30" class="svg-m" font-size="16" fill="#fff">&gt;_</text></svg><b class="dot"></b></div>
  <div class="di"><svg width="66" height="66"><use href="#i-excel"/></svg><b class="dot"></b></div>
  <div class="di"><svg width="66" height="66" viewBox="0 0 66 66"><circle cx="33" cy="33" r="32" fill="#4a9dd8"/><path d="M50 18L14 33l10 4 18-13-13 16 10 12z" fill="#fff"/><path d="M29 40l-3 10 5-6z" fill="#c8d9e6"/></svg><b class="dot"></b></div>
  <div class="di"><svg width="66" height="66" viewBox="0 0 66 66"><g transform="rotate(-12 30 36)"><rect x="6" y="12" width="48" height="50" rx="2" fill="#3f8fe8"/><path d="M18 50L32 20l12 30M14 42h34" fill="none" stroke="#a9d4fb" stroke-width="3"/></g><path d="M58 4L42 64" stroke="#2b2b2b" stroke-width="6"/><path d="M40 6c8-6 18-4 24 6l-6 4-8-4-8 2z" fill="#b9bec4"/></svg><b class="dot"></b></div>
  <div class="dsep"></div>
  <div class="di"><svg width="66" height="66" viewBox="0 0 66 66"><path d="M10 1h30c8 0 18 18 16 28v35H10z" fill="#fafafa"/><path d="M38 1c10 4 12 14 18 28-6-8-16-4-18-8z" fill="#d8d8d8"/></svg></div>
  <div class="di"><svg width="66" height="66" viewBox="0 0 66 66"><rect x="1" y="10" width="64" height="46" fill="#fff"/><rect x="3" y="12" width="60" height="3" fill="#3f6fd8"/><path d="M4 20h24M4 26h26M4 32h22M4 38h26M4 44h20" stroke="#bbb" stroke-width="2"/><rect x="44" y="40" width="20" height="24" rx="2" fill="#3d9bf0"/><rect x="54" y="40" width="10" height="24" fill="#e8eef5"/></svg></div>
  <div class="di"><svg width="66" height="66" viewBox="0 0 66 66"><rect x="1" y="3" width="64" height="46" fill="#fff"/><rect x="3" y="14" width="60" height="30" fill="#dfe9c0"/><path d="M20 4v44M36 4v44" stroke="#b9b9b9"/><rect x="3" y="46" width="60" height="4" fill="#e8c93a"/><rect x="42" y="44" width="22" height="22" fill="#2f7d4c"/><text x="53" y="60" class="svg-b" font-size="13" fill="#fff" text-anchor="middle">X</text></svg></div>
  <div class="di"><svg width="66" height="66" viewBox="0 0 66 66"><rect x="1" y="8" width="64" height="46" fill="#fff"/><rect x="16" y="12" width="46" height="5" fill="#4fa862"/><path d="M18 24h14M18 32h14M18 40h14M40 24h14M40 32h14" stroke="#ccc" stroke-width="2"/><rect x="42" y="40" width="24" height="26" rx="3" fill="#2b0020" stroke="#ea4fb5" stroke-width="2"/><text x="54" y="59" class="svg-t" font-size="15" fill="#fad7f0" text-anchor="middle">Xd</text></svg></div>
  <div class="di"><svg width="66" height="66" viewBox="0 0 66 66"><rect x="1" y="2" width="64" height="50" fill="#fff"/><path d="M8 12h20M14 18h30M14 24h36M20 30h20M14 36h30M8 42h24" stroke="#9cb0c8" stroke-width="2"/><g transform="rotate(-10 52 52)"><rect x="42" y="44" width="20" height="22" fill="#3f8fe8"/></g><path d="M64 40l-9 26" stroke="#222" stroke-width="3"/></svg></div>
  <div class="di"><svg width="66" height="66" viewBox="0 0 66 66"><rect x="1" y="4" width="64" height="46" fill="#fff"/><rect x="1" y="4" width="64" height="6" fill="#111"/><path d="M8 16h16M8 22h14M8 28h16M8 34h14M30 16h30M30 24h24M30 32h28" stroke="#8ab4e8" stroke-width="2"/><circle cx="54" cy="52" r="13" fill="url(#gBlue)"/><path d="M60 44l-8 6-3 8 8-6z" fill="#e5402f"/></svg></div>
  <div class="di"><svg width="66" height="66" viewBox="0 0 66 66"><rect x="1" y="8" width="64" height="46" fill="#fff"/><rect x="1" y="8" width="22" height="46" fill="#f4f4f4"/><rect x="22" y="18" width="30" height="5" fill="#4fa862"/><rect x="52" y="8" width="13" height="46" fill="#9a9a9a"/><rect x="42" y="40" width="24" height="26" rx="3" fill="#2b0020" stroke="#ea4fb5" stroke-width="2"/><text x="54" y="59" class="svg-t" font-size="15" fill="#fad7f0" text-anchor="middle">Xd</text></svg></div>
  <div class="di"><svg width="66" height="66" viewBox="0 0 66 66"><path d="M8 12c0-8 50-8 50 0l-6 48c-1 8-37 8-38 0z" fill="#e6e7ea"/><ellipse cx="33" cy="12" rx="25" ry="7" fill="#b8bcc2"/><path d="M18 12l6-8 6 8zM30 12l8-9 6 9zM12 12l3-3 4 4z" fill="#fff"/><path d="M24 12l5-6 4 6z" fill="#5a6a80"/></svg></div>
</nav>

<section class="dialog">
  <div class="dlg-title">
    <span class="dlg-l"></span><span class="dlg-l"></span><span class="dlg-l"></span>
    <span class="dlg-name">Force Quit Applications</span>
  </div>
  <div class="dlg-body">
    <p class="dlg-text">If an app doesn’t respond for a while, select its<br>name and click Force Quit.</p>
    <div class="dlg-list">
      <div class="li"><svg width="30" height="30"><use href="#i-chrome"/></svg><span>Google Chrome</span></div>
      <div class="li li-on"><svg width="30" height="30"><use href="#i-excel"/></svg><span class="nr">Microsoft Excel</span><span class="nrx">(not responding)</span></div>
      <div class="li"><svg width="30" height="30"><use href="#i-word"/></svg><span>Microsoft Word</span></div>
      <div class="li"><svg width="30" height="30"><use href="#i-music"/></svg><span>Music</span></div>
      <div class="li"><svg width="30" height="30"><use href="#i-ps"/></svg><span>Photoshop CC</span></div>
      <div class="li"><svg width="30" height="30"><use href="#i-safari"/></svg><span>Safari</span></div>
      <div class="li"><svg width="30" height="30"><use href="#i-skype"/></svg><span>Skype</span></div>
      <div class="li"><svg width="30" height="30"><use href="#i-sfb"/></svg><span>Skype for Business</span></div>
    </div>
    <div class="dlg-foot">
      <p class="dlg-hint">You can open this window by pressing<br>Command-Option-Escape.</p>
      <button class="dlg-btn">Force Quit</button>
    </div>
  </div>
</section>
</body>
</html>
```
FILE: styles.css
```css
* { box-sizing: border-box; }
html, body { margin: 0; padding: 0; }
body {
  width: 3360px; height: 2100px; overflow: hidden; position: relative;
  display: flex; flex-direction: column;
  font-family: Roboto, "Liberation Sans", sans-serif; color: #222;
  background: radial-gradient(circle at 20% 30%, #17324e 0, #0c1f33 60%, #0a1a2c 100%);
}
i, b { display: block; font-style: normal; }
p { margin: 0; }
.defs { position: absolute; }
.svg-t { font-family: Roboto, sans-serif; }
.svg-b { font-family: "Liberation Sans", sans-serif; font-weight: 700; }
.svg-m { font-family: "Liberation Mono", monospace; font-weight: 700; }

/* menu bar */
.menubar {
  height: 46px; flex: none; display: flex; align-items: center;
  background: linear-gradient(90deg, #bfdef2, #c6e0ee 60%, #cde2ec);
  border-bottom: 2px solid #1d3a52; padding-left: 42px;
  font-size: 28.800px; color: #13252f;
}
.apple { margin-right: 22px; margin-top: -4px; }
.menu { height: 44px; line-height: 43px; padding: 0 18.600px; }
.menu-app { font-weight: 700; padding-left: 19px; }
.menu-on { background: #3f7fe2; color: #fff; }
.tray { margin-left: auto; display: flex; align-items: center; padding-right: 45px; }
.tray-a { width: 32px; height: 34px; border-radius: 5px; background: #11304a; color: #fff; text-align: center; line-height: 34px; font-size: 24px; margin-left: 27px; }
.tray-wifi { margin-left: 30px; }
.tray-pct { font-size: 27px; margin-left: 24px; }
.tray-batt { margin-left: 9px; }
.tray-time { margin-left: 40px; }
.tray-search { margin-left: 45px; }
.tray-siri { margin-left: 36px; }
.tray-list { margin-left: 23px; }

/* window */
.window {
  width: 3360px; height: 1958px; flex: none; display: flex; flex-direction: column;
  background: #fff; border-radius: 12px 12px 14px 14px; overflow: hidden;
}
.titlebar {
  height: 54px; flex: none; display: grid; grid-template-columns: 1fr auto 1fr; align-items: center;
  background: linear-gradient(#f0f0f0, #e8e8e8);
}
.title-left { display: flex; align-items: center; padding-left: 26px; }
.light { width: 24px; height: 24px; border-radius: 50%; margin-right: 16px; }
.light-r { background: #ed6a5e; box-shadow: inset 0 0 0 9px #ed6a5e; position: relative; }
.light-r::after { content: ""; position: absolute; left: 8px; top: 8px; width: 8px; height: 8px; border-radius: 50%; background: #6e120b; }
.light-y { background: #f5bf4f; }
.light-g { background: #61c554; }
.title-sep { width: 2px; height: 32px; background: #d9d9d9; margin-left: 11px; }
.qat-home { margin-left: 30px; }
.qat-save { margin-left: 31px; }
.qat-undo { margin-left: 33px; }
.caret-qat { margin-left: 8px; }
.qat-redo { margin-left: 30px; }
.qat-more { margin-left: 41px; }
.title-mid { display: flex; align-items: center; gap: 10px; font-size: 27px; color: #3c3c3c; }
.title-right { display: flex; align-items: center; justify-content: flex-end; padding-right: 30px; }
.search { width: 359px; height: 38px; background: #fff; border: 1px solid #d9d9d9; border-radius: 6px; color: #a8a8a8; font-size: 26.500px; line-height: 36px; padding-left: 55px; margin-right: 34px; }
.smiley { margin-right: 8px; }

.caret { width: 0; height: 0; flex: none; border-left: 5px solid transparent; border-right: 5px solid transparent; border-top: 11px solid #6e6e6e; }
.caret-sm { border-left-width: 4.500px; border-right-width: 4.500px; border-top-width: 9px; }
.caret-light { border-top-color: #c9c9c9; }

/* tabs */
.tabs {
  height: 46px; flex: none; display: flex; align-items: flex-end; padding-left: 22px;
  background: linear-gradient(#e8e8e8, #dddddd);
  border-bottom: 2px solid #c6c6c6; font-size: 27.500px; color: #1d1d1d;
}
.tab { height: 44px; line-height: 44px; padding: 0 27px; }
.tab-on { height: 46px; margin-bottom: -2px; padding: 0 23px 0 21px; background: linear-gradient(#fff, #f5f5f5); color: #2f7040; border: 1px solid #e0e0e0; border-bottom: 0; border-radius: 4px 4px 0 0; line-height: 44px; }
.share { margin-left: auto; display: flex; align-items: center; height: 44px; padding-right: 33px; gap: 8px; font-weight: 500; }
.chev { margin-left: 22px; }

/* ribbon */
.ribbon { height: 140px; flex: none; display: flex; background: #f5f5f5; font-size: 22.500px; color: #1e1e1e; }
.rg { margin: 8px 0; border-right: 2px solid #dfdfdf; padding-top: 9px; display: flex; flex-direction: column; gap: 13px; }
.rrow { display: flex; gap: 11px; height: 46px; }
.rg-clip { width: 274px; flex-direction: row; padding-top: 0; gap: 0; padding-left: 30px; }
.paste { width: 104px; display: flex; flex-direction: column; }
.paste-top { display: flex; align-items: center; gap: 19px; padding-top: 6px; height: 72px; }
.lbl { font-size: 22.500px; line-height: 26px; text-align: left; }
.paste .lbl { margin-left: 6px; margin-top: 16px; }
.clip-list { display: flex; flex-direction: column; gap: 16px; margin-top: 1px; }
.clip-item { display: flex; align-items: center; height: 31px; gap: 0; }
.clip-item svg { width: 41px; flex: none; padding-right: 11px; }
.clip-item .caret { margin-left: 12px; }

.combo { height: 46px; background: #fff; border: 2px solid #cbcbcb; border-radius: 9px; display: flex; align-items: center; padding-left: 8px; position: relative; font-size: 25.500px; }
.combo span { flex: 1; }
.combo-sep { width: 1px; height: 34px; background: #e0e0e0; margin-right: 9px; }
.combo .caret { margin-right: 8px; }
.combo-font { width: 207px; }
.combo-size { width: 104px; }
.combo-gen { width: 316px; }
.rg-font { width: 484px; padding-left: 18px; }

.bgroup { display: flex; height: 46px; border: 2px solid #cfcfcf; border-radius: 9px; background: linear-gradient(#f7f7f7, #ececec); overflow: hidden; border-top-color: #dcdcdc; }
.bc { flex: 1; display: flex; align-items: center; justify-content: center; border-right: 1px solid #d6d6d6; }
.bc:last-child { border-right: 0; }
.bc-on { background: #c9c9c9; }
.bg-grow { width: 115px; }
.big-a { font-size: 34px; line-height: 40px; color: #333; margin-right: 3px; }
.small-a { font-size: 28px; line-height: 40px; color: #444; margin-right: 2px; }
.tri-up { border-left: 7px solid transparent; border-right: 7px solid transparent; border-bottom: 10px solid #3b88e0; margin-top: -6px; }
.tri-down { border-left: 7px solid transparent; border-right: 7px solid transparent; border-top: 10px solid #3b88e0; margin-top: -6px; }
.bg-biu { width: 195px; }
.bg-biu .bc { flex: none; width: 56px; font-size: 30px; line-height: 40px; color: #333; }
.bg-biu .bc-on { width: 58px; }
.bg-biu .bc-arrow { width: 21px; }
.b-b { font-family: "Liberation Sans", sans-serif; font-weight: 700; font-size: 32px; }
.b-i { font-family: "Liberation Serif", serif; font-style: italic; font-size: 34px; }
.b-u span { border-bottom: 3px solid #333; line-height: 30px; }
.bg-border { width: 77px; }
.bc-fill { gap: 8px; }
.bg-color { width: 153px; }
.bc-col { gap: 8px; }
.rg-align { width: 336px; padding-left: 19px; }
.rg-align .rrow { gap: 12px; }
.bg-three { width: 172px; }
.bg-orient { width: 70px; }
.bg-indent { width: 114px; }
.rg-wrap { width: 282px; padding-left: 18px; }
.bg-wrap { width: 188px; }
.bc-wraptext { flex: none; width: 164px; gap: 6px; font-size: 23px; justify-content: flex-start; padding-left: 10px; white-space: nowrap; }
.bc-arrow2 { flex: 1; }
.merge { align-items: center; gap: 13px; color: #9b9b9b; padding-left: 12px; white-space: nowrap; font-size: 23px; }
.merge .caret { margin-left: 5px; }
.rg-num { width: 351px; padding-left: 17px; }
.rg-num .rrow { gap: 10px; }
.bg-cur { width: 190px; }
.bc-coins { flex: none; width: 72px; gap: 4px; }
.sym { flex: none; width: 58px; font-size: 34px; line-height: 40px; color: #333; }
.bg-dec { width: 116px; }
.dec { gap: 2px; }
.dec-txt { display: flex; flex-direction: column; align-items: flex-end; font-size: 20px; line-height: 20px; color: #333; }
.dec2 .dec-txt { align-items: flex-end; }
.rg-styles { width: 245px; flex: none; display: flex; padding-left: 18px; }
.big-item { display: flex; flex-direction: column; align-items: center; }
.bi-top { display: flex; align-items: center; gap: 6px; height: 56px; margin-top: 20px; }
.lbl2 { font-size: 22px; line-height: 24px; text-align: center; margin-top: 11px; display: block; }
.bi-cond { width: 116px; padding-left: 2px; }
.bi-fmt { width: 106px; padding-left: 6px; }

.gallery { width: 602px; height: 115px; flex: none; margin-top: 12px; background: #fff; border: 2px solid #d2d2d2; border-radius: 8px; display: flex; align-items: center; }
.gal-grid { display: grid; grid-template-columns: 168px 168px 168px; grid-template-rows: 40px 40px; gap: 14px 4px; margin-left: 42px; }
.st { font-size: 24.500px; line-height: 38px; padding-left: 9px; position: relative; }
.st-date { color: #555; font-size: 23px; }
.st-normal { color: #222; font-weight: 500; font-size: 23px; }
.st-normal::after { content: ""; position: absolute; left: -1px; right: -1px; top: -8px; bottom: -5px; border: 3px solid #5e9a70; border-radius: 8px; box-shadow: inset 0 8px 0 -1px #dcebdf, inset 0 -8px 0 -1px #dcebdf; }
.st-bad { background: #f6c7ce; color: #9c0f16; }
.st-good { background: #c9ebca; color: #1d6100; }
.st-neutral { background: #fde9a9; color: #9c6500; }
.st-calc { background: #f2f2f2; color: #e97a1b; font-weight: 700; border: 3px solid #7f7f7f; line-height: 33px; padding-left: 6px; }
.gal-next { margin-left: 19px; border-top: 12px solid transparent; border-bottom: 12px solid transparent; border-left: 12px solid #555; margin-top: 2px; }

.rg-cells { width: 335px; flex: none; margin: 8px 0 8px 16px; border-left: 2px solid #dfdfdf; border-right: 2px solid #dfdfdf; display: flex; padding-left: 10px; }
.cell-item { width: 103px; display: flex; flex-direction: column; align-items: center; }
.cell-item .bi-top { margin-top: 12px; height: 56px; }
.cell-item > .lbl { margin-top: 11px; }
.cell-item > .lbl2 { margin-top: 11px; }
.rg-edit { flex: 1; display: flex; margin: 8px 0; padding-left: 32px; }
.edit-list { width: 168px; margin-top: 1px; }
.ci-sort { width: 92px; }
.muted { color: #a8a8a8; }
.ci-find { width: 102px; margin-left: 6px; }

/* formula bar */
.formula { height: 59px; flex: none; display: flex; align-items: center; background: #fff; border-top: 2px solid #c8c8c8; border-bottom: 4px double #b8b8b8; }
.namebox { width: 170px; height: 100%; border-right: 2px solid #cfcfcf; display: flex; align-items: center; justify-content: space-between; padding: 2px 9px 0 20px; font-size: 25px; }
.spin { display: flex; flex-direction: column; gap: 8px; }
.tri-a { border-left: 6px solid transparent; border-right: 6px solid transparent; border-bottom: 12px solid #666; }
.tri-b { border-left: 6px solid transparent; border-right: 6px solid transparent; border-top: 12px solid #666; }
.f-x { margin-left: 28px; }
.f-c { margin-left: 33px; }
.f-fx { font-family: "Liberation Serif", serif; font-style: italic; font-size: 34px; margin-left: 32px; color: #333; }
.f-sep { width: 2px; height: 30px; background: #e0e0e0; margin-left: 12px; }
.f-input { flex: 1; }
.f-caret { margin-right: 10px; border-left-width: 7px; border-right-width: 7px; border-top-width: 12px; }

/* column header */
.colhead {
  height: 45px; flex: none; display: grid;
  grid-template-columns: 46px 31px 214px 275px 355px 603px repeat(17, 105.900px) 1fr;
  background: #f3f3f3; font-family: "Liberation Sans", sans-serif; font-size: 24px; color: #3b7a50;
}
.corner { border-right: 2px solid #bbb; border-bottom: 2px solid #cfcfcf; background: linear-gradient(135deg, transparent 50%, #e1e1e1 50%) 9px 9px / 30px 30px no-repeat; width: 46px; }
.ch { border-bottom: 4px solid #3b7250; border-right: 2px solid #e3e3e3; text-align: center; line-height: 43px; }

/* sheet */
.sheet { flex: 1; min-height: 0; position: relative; overflow: hidden; font-family: "Liberation Sans", sans-serif; font-size: 21.900px; background: #fff; }
.row { display: grid; grid-template-columns: 46px 31px 214px 275px 355px 603px 1fr; }
.r1 { height: 50px; }
.r2 { height: 42px; }
.r60 { height: 60px; }
.r8 { height: 148px; }
.r9 { height: 59px; }
.r10 { height: 181px; }
.r11 { height: 58px; }
.r12 { height: 142px; background: #f6c7ce; }
.r13 { height: 60px; }
.r14 { height: 170px; }
.rh {
  border-right: 2px solid #bbb; display: flex; align-items: flex-end; justify-content: center; padding: 0 2px 1px 0;
  font-size: 24px; line-height: 26px; color: #555;
  background: linear-gradient(90deg, transparent, #e2e2e2 40%) bottom / 100% 2px no-repeat, linear-gradient(90deg, #fff, #f5f5f5);
}
.rh-1 { padding-bottom: 4px; }
.rh-sel { background: linear-gradient(#9cc6a6 2px, #a5c9ad 40px); color: #33413a; }
.c { display: flex; align-items: center; padding: 4px 0 0 5px; border-bottom: 4px solid #d6d6d6; white-space: nowrap; position: relative; }
.span4 { grid-column: 3 / span 4; }
.c-title { font-weight: 700; font-size: 38px; color: #1f1f1f; border-bottom: 6px solid #2f5f9a; padding: 3px 0 0 8px; }
.c-hd { font-weight: 700; font-size: 22px; color: #1f1f1f; border-bottom: 4px solid #000; padding: 2px 0 0 5px; }
.filter { position: absolute; right: 1px; top: 4px; width: 33px; height: 34px; border: 2px solid #b5b5b5; background: linear-gradient(135deg, #f6f6f6, #ededed); }
.filter::after { content: ""; position: absolute; left: 7px; top: 11px; border-left: 8px solid transparent; border-right: 8px solid transparent; border-top: 9px solid #777; }
.c-code { color: #595959; padding-left: 5px; }
.c-b { color: #2a5f9e; }
.pre { white-space: pre; }
.c-nb { border-bottom: 0; padding-top: 0; }
.c-multi { flex-direction: column; align-items: flex-start; justify-content: flex-start; padding-top: 32px; line-height: 28px; }
.red { color: #f0201a; padding-left: 175px; }
.c-one { padding-left: 186px; }
.gray-fill { grid-column: 3 / -1; background: #c4c4c4; margin: 3px 0 6px; }
.c-white { background: #fff; }
.ants {
  position: absolute; left: 76px; top: 538px; width: 1448px; height: 63px;
  background:
    repeating-linear-gradient(90deg, #3b7250 0 14px, #dfe5e0 14px 20px) top / 100% 4px no-repeat,
    repeating-linear-gradient(90deg, #3b7250 0 14px, #fff 14px 20px) bottom / 100% 4px no-repeat,
    repeating-linear-gradient(#3b7250 0 14px, #fff 14px 20px) left / 4px 100% no-repeat,
    repeating-linear-gradient(#3b7250 0 14px, #fff 14px 20px) right / 4px 100% no-repeat;
}
.ants-div { position: absolute; left: 212px; top: 0; width: 4px; height: 100%; background: repeating-linear-gradient(#3b7250 0 14px, #fff 14px 20px); }
.selection { position: absolute; left: 42px; top: 597px; right: 0; height: 183px; border: 4px solid #3b7250; border-right: 0; }
.handle { position: absolute; left: -4px; bottom: -5px; width: 14px; height: 12px; background: #3b7250; border: 2px solid #fff; border-width: 0 2px 0 0; }
.scrollbar { position: absolute; left: 50px; top: 1496px; width: 2485px; height: 14px; border-radius: 7px; background: rgba(0, 0, 0, .37); }

/* sheet tabs */
.sheettabs { height: 52px; flex: none; display: flex; align-items: center; background: #ededed; border-top: 2px solid #d2d2d2; padding-left: 30px; position: relative; }
.st-arrow { margin-right: 27px; margin-top: 2px; }
.sheet-tab { width: 157px; height: 45px; align-self: flex-start; margin-top: -2px; background: #fff; border: 6px solid #fff; border-top: 6px solid #ededed; border-radius: 0 0 6px 6px; box-shadow: 0 2px 2px #aaa; }
.sheet-tab span { display: block; height: 100%; background: linear-gradient(#e6eef6, #a9c2da); text-align: center; color: #3f7c4f; font-weight: 700; font-size: 24px; line-height: 33px; font-family: "Liberation Sans", sans-serif; }
.st-plus { margin-left: 29px; }
.st-sep { width: 2px; height: 42px; background: #d8d8d8; margin-left: 26px; }

/* status */
.status { height: 46px; flex: none; display: flex; align-items: center; justify-content: space-between; background: #3b6e47; color: #e6efe8; font-size: 25.500px; padding: 0 49px 0 28px; }
.status-right { display: flex; align-items: center; }
.status-right svg { margin-right: 42px; }
.status-right svg:nth-child(3) { margin-right: 0; }
.z-minus { width: 15px; height: 4px; background: #fff; margin-left: 37px; }
.z-track { width: 195px; height: 16px; border-radius: 8px; background: #2a5436; margin-left: 17px; position: relative; }
.z-thumb { position: absolute; left: 87px; top: -6px; width: 21px; height: 28px; border-radius: 50%; background: #eee; }
.z-plus { width: 16px; height: 16px; margin-left: 16px; background: linear-gradient(#fff, #fff) center / 16px 4px no-repeat, linear-gradient(#fff, #fff) center / 4px 16px no-repeat; }
.z-val { margin-left: 35px; font-size: 25px; }

/* dock */
.dock {
  width: 3212px; height: 96px; flex: none; margin-left: 60px; display: flex; padding-left: 5px;
  background: linear-gradient(90deg, #4d6379 0, #4f6479 60%, #8a8d99 65%, #8f919c 70%, #6f7686 76%, #858995 82%, #8e939c 100%);
}
.di { width: 78.900px; flex: none; position: relative; display: flex; flex-direction: column; align-items: center; padding-top: 11px; }
.dot { width: 6px; height: 7px; border-radius: 50%; background: #0a0a0a; margin-top: 8px; }
.dsep { width: 36.400px; flex: none; background: linear-gradient(#3a4653, #3a4653) center 12px / 2px 72px no-repeat; }
.badge { position: absolute; left: 54px; top: 8px; width: 28px; height: 28px; border-radius: 50%; background: #e2483d; color: #fff; font-size: 20px; font-weight: 400; text-align: center; line-height: 28px; }

/* force quit dialog */
.dialog {
  position: absolute; left: 430px; top: 843px; width: 677px; height: 616px;
  border-radius: 12px; overflow: hidden; background: #ebebeb;
  box-shadow: 0 0 2px rgba(0, 0, 0, .35), 0 24px 70px rgba(0, 0, 0, .3);
  font-family: Roboto, sans-serif; font-size: 27.200px; color: #2b2b2b;
}
.dlg-title { height: 44px; background: #f6f6f6; border-bottom: 2px solid #dcdcdc; display: flex; align-items: center; padding-left: 16px; gap: 16px; position: relative; }
.dlg-l { width: 24px; height: 24px; border-radius: 50%; background: #dcdcdc; border: 1px solid #d2d2d2; }
.dlg-name { position: absolute; left: 0; right: 0; top: 9px; line-height: 32px; text-align: center; color: #ababab; font-size: 27px; }
.dlg-body { padding: 42px 41px 0 40px; }
.dlg-text { line-height: 32px; font-size: 27px; letter-spacing: .25px; }
.dlg-list { height: 336px; margin-top: 15px; background: #fff; border: 2px solid #c4c4c4; overflow: hidden; }
.li { height: 44px; display: flex; align-items: center; padding: 0 0 6px 7px; }
.li svg { margin-right: 17px; flex: none; }
.li-on { background: linear-gradient(#d8d8d8, #d8d8d8) top / 100% 42px no-repeat; }
.nr { color: #9c1c10; }
.nrx { color: #a8a8a8; margin-left: 9px; }
.dlg-foot { display: flex; justify-content: space-between; align-items: flex-start; margin-top: 28px; }
.dlg-hint { font-size: 20px; line-height: 26px; letter-spacing: .72px; color: #333; }
.dlg-btn { width: 181px; height: 41px; margin-top: 5px; border: 1px solid #d4d4d4; border-radius: 7px; background: #fff; font: inherit; color: #222; padding: 0 0 2px; box-shadow: 0 1px 1px #c9c9c9; }
```
